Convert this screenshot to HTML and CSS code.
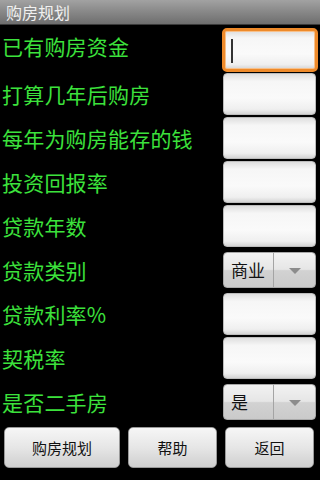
FILE: index.html
```html
<!DOCTYPE html>
<html lang="zh">
<head>
<meta charset="utf-8">
<title>购房规划</title>
<link rel="stylesheet" href="styles.css">
</head>
<body>
<div class="screen">
  <div class="titlebar">购房规划</div>
  <div class="form">
    <div class="row row-first">
      <span class="label label-up">已有购房资金</span>
      <div class="field focused"><span class="cursor"></span></div>
    </div>
    <div class="row">
      <span class="label">打算几年后购房</span>
      <div class="field"></div>
    </div>
    <div class="row">
      <span class="label">每年为购房能存的钱</span>
      <div class="field"></div>
    </div>
    <div class="row">
      <span class="label">投资回报率</span>
      <div class="field"></div>
    </div>
    <div class="row">
      <span class="label">贷款年数</span>
      <div class="field"></div>
    </div>
    <div class="row">
      <span class="label">贷款类别</span>
      <div class="spinner">
        <span class="spinner-text">商业</span>
        <span class="spinner-arrow"></span>
      </div>
    </div>
    <div class="row">
      <span class="label">贷款利率%</span>
      <div class="field"></div>
    </div>
    <div class="row">
      <span class="label">契税率</span>
      <div class="field"></div>
    </div>
    <div class="row">
      <span class="label">是否二手房</span>
      <div class="spinner">
        <span class="spinner-text">是</span>
        <span class="spinner-arrow"></span>
      </div>
    </div>
  </div>
  <div class="buttons">
    <div class="btn btn-wide">购房规划</div>
    <div class="btn">帮助</div>
    <div class="btn">返回</div>
  </div>
</div>
</body>
</html>
```

FILE: styles.css
```css
html, body {
  margin: 0;
  padding: 0;
  background: #000;
}
.screen {
  width: 320px;
  height: 480px;
  background: #000;
  font-family: "Noto Sans CJK SC", "Noto Sans", sans-serif;
  overflow: hidden;
}
.titlebar {
  height: 25px;
  box-sizing: border-box;
  padding-left: 6px;
  line-height: 24px;
  font-size: 16px;
  color: #f0f0f0;
  background: linear-gradient(#a2a2a2, #8a8a8a 45%, #6e6e6e);
  border-bottom: 1px solid #3a3a3a;
}
.form {
  padding-top: 2px;
  display: flex;
  flex-direction: column;
}
.row {
  height: 44px;
  display: flex;
  align-items: center;
  justify-content: space-between;
  padding-left: 2px;
  padding-right: 4px;
}
.row-first {
  height: 45px;
}
.label {
  font-size: 21px;
  line-height: 24px;
  color: #3ce23c;
  letter-spacing: 0.2px;
}
.label-up {
  margin-bottom: 8px;
}
.field {
  position: relative;
  width: 93px;
  height: 42px;
  box-sizing: border-box;
  border-radius: 4px;
  border: 1px solid #bcbcbc;
  background: linear-gradient(#dedede, #f6f6f6 18%, #fafafa 60%, #efefef 88%, #d4d4d4);
}
.field.focused {
  width: 96px;
  height: 44px;
  margin-right: -2px;
  border: 3px solid #ee8a2a;
  border-radius: 5px;
  box-shadow: inset 0 0 0 1px #f7c08a;
}
.cursor {
  position: absolute;
  left: 6px;
  top: 8px;
  width: 2px;
  height: 24px;
  background: #333;
}
.spinner {
  width: 93px;
  height: 36px;
  box-sizing: border-box;
  border-radius: 4px;
  border: 1px solid #a8a8a8;
  background: linear-gradient(#f2f2f2, #e6e6e6 48%, #d2d2d2 52%, #cacaca);
  display: flex;
  align-items: stretch;
}
.spinner-text {
  width: 50px;
  box-sizing: border-box;
  padding-left: 7px;
  font-size: 17px;
  line-height: 34px;
  color: #111;
  border-right: 1px solid #a4a4a4;
  overflow: hidden;
  white-space: nowrap;
}
.spinner-arrow {
  flex: 1;
  position: relative;
}
.spinner-arrow::after {
  content: "";
  position: absolute;
  left: 15px;
  top: 15px;
  border-left: 6px solid transparent;
  border-right: 6px solid transparent;
  border-top: 6px solid #8c8c8c;
}
.buttons {
  display: flex;
  gap: 8px;
  padding: 3px 7px 0 4px;
}
.btn {
  flex: 0 0 89px;
  height: 41px;
  box-sizing: border-box;
  border-radius: 5px;
  border: 1px solid #999;
  background: linear-gradient(#f6f6f6, #e6e6e6 50%, #cfcfcf);
  display: flex;
  align-items: center;
  justify-content: center;
  font-size: 15px;
  color: #111;
}
.btn-wide {
  flex-basis: 116px;
}
```
